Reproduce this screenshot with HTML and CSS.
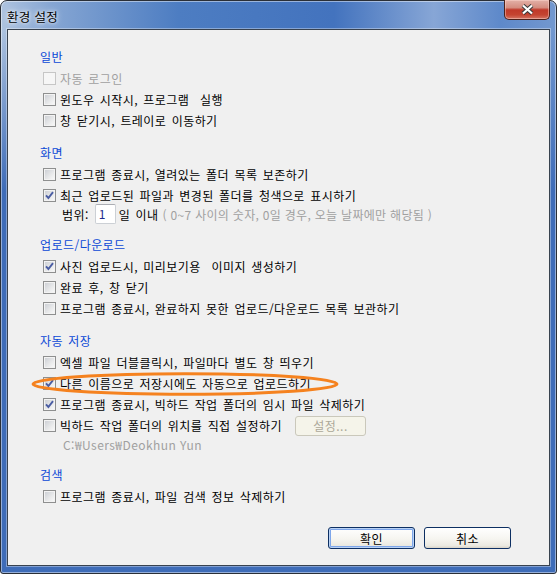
FILE: index.html
```html
<!DOCTYPE html>
<html lang="ko">
<head>
    <meta charset="UTF-8">
    <title>환경 설정</title>
    <link rel="stylesheet" href="styles.css">
</head>
<body>

    <div class="window">
        <div class="titlebar">
            <span class="title">환경 설정</span>
            <div class="close-btn">
                <svg width="15" height="11" viewBox="0 0 15 11">
                    <path d="M3 1.5 L12 9.5 M12 1.5 L3 9.5" stroke="#3b3b3b" stroke-width="4.2" fill="none"/>
                    <path d="M3 1.5 L12 9.5 M12 1.5 L3 9.5" stroke="#ffffff" stroke-width="2.2" fill="none"/>
                </svg>
            </div>
        </div>

        <div class="client">
            <!-- 일반 -->
            <div class="section">
                <h3 class="section-title">일반</h3>
                <div class="option disabled"><span class="check"></span>자동 로그인</div>
                <div class="option"><span class="check"></span>윈도우 시작시, 프로그램&nbsp; 실행</div>
                <div class="option"><span class="check"></span>창 닫기시, 트레이로 이동하기</div>
            </div>

            <!-- 화면 -->
            <div class="section">
                <h3 class="section-title">화면</h3>
                <div class="option"><span class="check"></span>프로그램 종료시, 열려있는 폴더 목록 보존하기</div>
                <div class="option"><span class="check checked"><svg width="9" height="9" viewBox="0 0 9 9"><path d="M1 4.3 L3.4 7 L8 1.2" stroke="#4a5da3" stroke-width="1.9" fill="none"/></svg></span>최근 업로드된 파일과 변경된 폴더를 청색으로 표시하기</div>
                <div class="range-row">
                    <span>범위:</span>
                    <span class="range-input">1</span>
                    <span>일 이내</span>
                    <span class="hint">( 0~7 사이의 숫자, 0일 경우, 오늘 날짜에만 해당됨 )</span>
                </div>
            </div>

            <!-- 업로드/다운로드 -->
            <div class="section">
                <h3 class="section-title">업로드/다운로드</h3>
                <div class="option"><span class="check checked"><svg width="9" height="9" viewBox="0 0 9 9"><path d="M1 4.3 L3.4 7 L8 1.2" stroke="#4a5da3" stroke-width="1.9" fill="none"/></svg></span>사진 업로드시, 미리보기용&nbsp; 이미지 생성하기</div>
                <div class="option"><span class="check"></span>완료 후, 창 닫기</div>
                <div class="option"><span class="check"></span>프로그램 종료시, 완료하지 못한 업로드/다운로드 목록 보관하기</div>
            </div>

            <!-- 자동 저장 -->
            <div class="section">
                <h3 class="section-title">자동 저장</h3>
                <div class="option"><span class="check"></span>엑셀 파일 더블클릭시, 파일마다 별도 창 띄우기</div>
                <div class="option marked">
                    <span class="check checked"><svg width="9" height="9" viewBox="0 0 9 9"><path d="M1 4.3 L3.4 7 L8 1.2" stroke="#4a5da3" stroke-width="1.9" fill="none"/></svg></span>다른 이름으로 저장시에도 자동으로 업로드하기
                    <svg class="mark" width="308" height="24" viewBox="0 0 308 24">
                        <ellipse cx="154" cy="12" rx="152" ry="10.3" stroke="#f5821f" stroke-width="3" fill="none"/>
                    </svg>
                </div>
                <div class="option"><span class="check checked"><svg width="9" height="9" viewBox="0 0 9 9"><path d="M1 4.3 L3.4 7 L8 1.2" stroke="#4a5da3" stroke-width="1.9" fill="none"/></svg></span>프로그램 종료시, 빅하드 작업 폴더의 임시 파일 삭제하기</div>
                <div class="option"><span class="check"></span><span class="option-label">빅하드 작업 폴더의 위치를 직접 설정하기</span><span class="small-btn">설정...</span></div>
                <div class="path-row">C:₩Users₩Deokhun Yun</div>
            </div>

            <!-- 검색 -->
            <div class="section">
                <h3 class="section-title">검색</h3>
                <div class="option"><span class="check"></span>프로그램 종료시, 파일 검색 정보 삭제하기</div>
            </div>

            <div class="dialog-buttons">
                <div class="btn default">확인</div>
                <div class="btn">취소</div>
            </div>
        </div>
    </div>

</body>
</html>
```

FILE: styles.css
```css
* {
    margin: 0;
    padding: 0;
    box-sizing: border-box;
}

body {
    font-family: "Noto Sans CJK KR", "Noto Sans", sans-serif;
    background: #fff;
    color: #000;
}

/* 창 프레임 */
.window {
    width: 557px;
    height: 574px;
    border: 1px solid #2a2f37;
    border-radius: 7px 7px 3px 3px;
    padding: 0 6px 7px;
    display: flex;
    flex-direction: column;
    background:
        linear-gradient(180deg, rgba(62, 108, 184, 0) 30px, #3e6cb8 190px),
        linear-gradient(90deg, #aec3df 0%, #86a6d3 9%, #4d7dc2 32%, #4373be 60%, #87a6d6 78%, #5e89ca 90%, #7398cf 100%);
    box-shadow: inset 0 0 0 1px rgba(255, 255, 255, 0.45);
}

.titlebar {
    height: 28px;
    display: flex;
    align-items: flex-start;
}

.title {
    padding-top: 8px;
    font-size: 12.5px;
    line-height: 15px;
    letter-spacing: 0.3px;
    text-shadow: 0 0 6px #fff, 0 0 3px rgba(255, 255, 255, 0.9);
}

.close-btn {
    margin: -1px 0 0 auto;
    width: 46px;
    height: 20px;
    border: 1px solid #4a211c;
    border-top: none;
    border-radius: 0 0 5px 5px;
    background: linear-gradient(180deg, #e3b1a8 0%, #d48d80 40%, #c0392a 52%, #c44431 78%, #d37464 100%);
    box-shadow: inset 0 0 0 1px rgba(255, 220, 210, 0.45);
    display: flex;
    align-items: center;
    justify-content: center;
}

/* 본문 영역 */
.client {
    flex: 1;
    background: #f0f0f0;
    border: 1px solid #38424f;
    box-shadow: 0 0 0 1px rgba(255, 255, 255, 0.35);
    padding: 16px 38px 16px 32px;
    display: flex;
    flex-direction: column;
    font-size: 12px;
    letter-spacing: 0.45px;
    word-spacing: 1.5px;
}

.section {
    margin-bottom: 11px;
}

.section-title {
    font-size: 12px;
    font-weight: normal;
    line-height: 22px;
    color: #0a48d6;
}

.option {
    display: flex;
    align-items: center;
    height: 21px;
    padding-left: 3px;
    white-space: nowrap;
}

.option.disabled {
    color: #a0a0a0;
}

.check {
    width: 13px;
    height: 13px;
    margin-right: 4px;
    flex-shrink: 0;
    border: 1px solid #8e8f8f;
    background: linear-gradient(135deg, #c9ccd2 0%, #e9eaeb 60%, #fbfbfb 100%);
    box-shadow: inset 0 0 0 1px #f3f3f3;
    display: flex;
    align-items: center;
    justify-content: center;
}

.disabled .check {
    border-color: #c6c6c6;
    background: #f6f6f6;
    box-shadow: none;
}

.option-label {
    width: 235px;
}

.small-btn {
    width: 71px;
    height: 20px;
    border: 1px solid #cac8bb;
    border-radius: 3px;
    background: #f5f4ea;
    color: #aca899;
    word-spacing: 0;
    display: flex;
    align-items: center;
    justify-content: center;
}

/* 강조 표시 (주황색 원) */
.marked {
    position: relative;
}

.mark {
    position: absolute;
    left: -9px;
    top: -1px;
}

/* 범위 입력 */
.range-row {
    display: flex;
    align-items: center;
    height: 18px;
    margin-top: -1px;
    padding-left: 22px;
    white-space: nowrap;
}

.range-input {
    width: 21px;
    height: 20px;
    margin: 0 3px 0 6px;
    border: 1px solid #ccd0d5;
    border-top-color: #abadb3;
    border-radius: 2px;
    background: #fff;
    color: #1e2b8c;
    padding-left: 3px;
    line-height: 18px;
}

.hint {
    margin-left: 4px;
    color: #a0a0a0;
    word-spacing: 0;
    letter-spacing: 0.3px;
}

.path-row {
    display: flex;
    align-items: center;
    height: 18px;
    margin-top: -1px;
    padding-left: 23px;
    color: #a0a0a0;
    word-spacing: 0;
}

/* 확인 / 취소 */
.dialog-buttons {
    margin-top: auto;
    display: flex;
    justify-content: flex-end;
    gap: 9px;
}

.btn {
    width: 87px;
    height: 22px;
    border: 1px solid #0d2f62;
    border-radius: 3px;
    background: linear-gradient(180deg, #ffffff 0%, #f6f5f0 55%, #ebe9e1 88%, #d9d4c8 100%);
    display: flex;
    align-items: center;
    justify-content: center;
}

.btn.default {
    box-shadow: inset 0 0 0 1px #b9d2f5, inset 0 0 0 2px #7ea6ea;
}
```
